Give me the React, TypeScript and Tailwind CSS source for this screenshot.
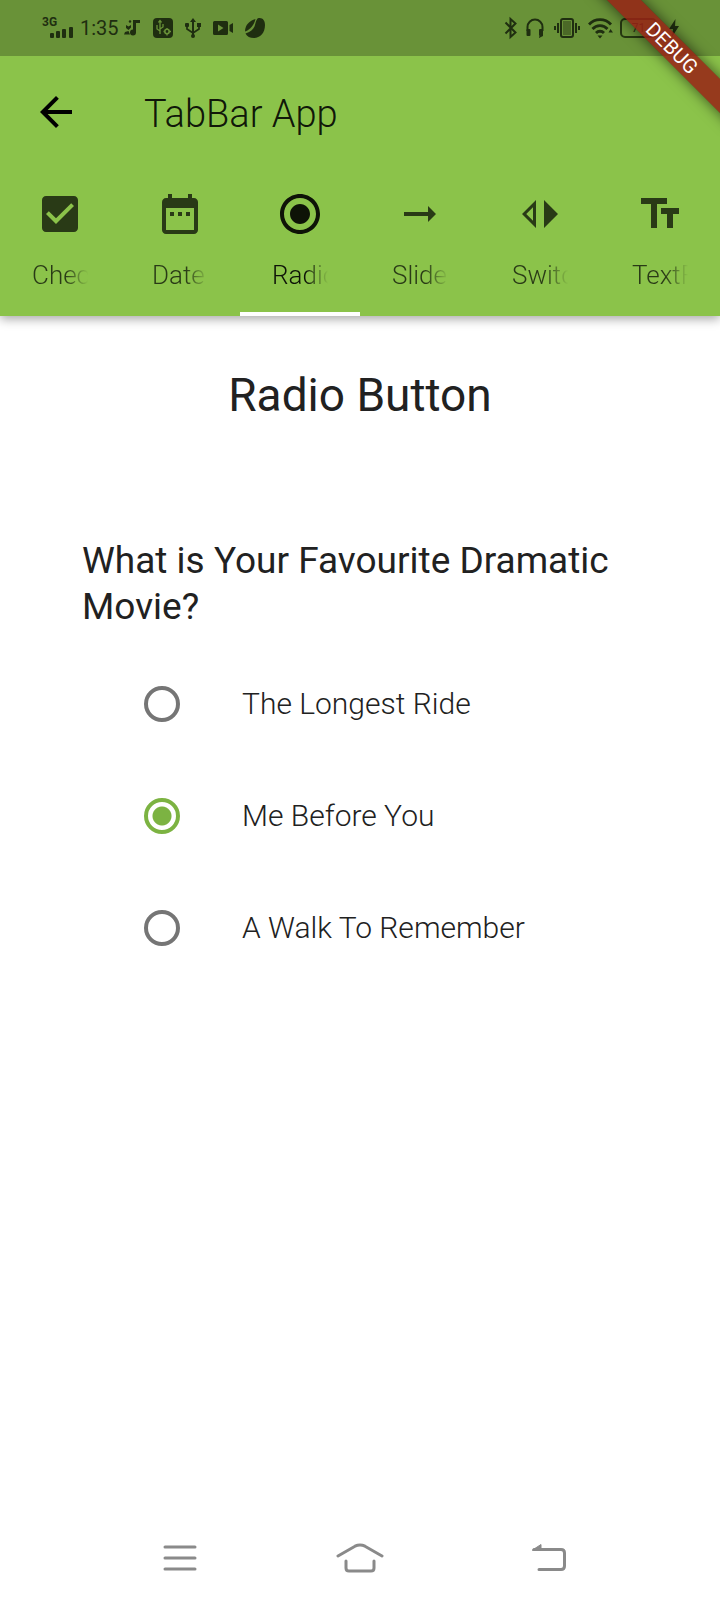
import { useState } from "react";
import type { ReactNode } from "react";

const tabs = [
  {
    label: "Checkbox",
    path: "M19 3H5c-1.11 0-2 .9-2 2v14c0 1.1.89 2 2 2h14c1.11 0 2-.9 2-2V5c0-1.1-.89-2-2-2zm-9 14l-5-5 1.41-1.41L10 14.17l7.59-7.59L19 8l-9 9z",
  },
  {
    label: "Date",
    path: "M9 11H7v2h2v-2zm4 0h-2v2h2v-2zm4 0h-2v2h2v-2zm2-7h-1V2h-2v2H8V2H6v2H5c-1.11 0-1.99.9-1.99 2L3 20c0 1.1.89 2 2 2h14c1.1 0 2-.9 2-2V6c0-1.1-.9-2-2-2zm0 16H5V9h14v11z",
  },
  {
    label: "Radio",
    path: "M12 7c-2.76 0-5 2.24-5 5s2.24 5 5 5 5-2.24 5-5-2.24-5-5-5zm0-5C6.48 2 2 6.48 2 12s4.48 10 10 10 10-4.48 10-10S17.52 2 12 2zm0 18c-4.42 0-8-3.58-8-8s3.58-8 8-8 8 3.58 8 8-3.58 8-8 8z",
  },
  { label: "Slider", path: "M16.01 11H4v2h12.01v3L20 12l-3.99-4v3z" },
  { label: "Switch", path: "M8.5 8.62v6.76L5.12 12 8.5 8.62M10 5l-7 7 7 7V5zm4 0v14l7-7-7-7z" },
  { label: "TextField", path: "M2.5 4v3h5v12h3V7h5V4h-13zm19 5h-9v3h3v7h3v-7h3V9z" },
];

const movies = ["The Longest Ride", "Me Before You", "A Walk To Remember"];

function StatusIcon({ w, children }: { w: number; children: ReactNode }) {
  return (
    <svg width={w} height="24" viewBox={`0 0 ${w} 24`} fill="currentColor" className="shrink-0" aria-hidden="true">
      {children}
    </svg>
  );
}

function StatusBar() {
  return (
    <div className="flex h-14 items-center justify-between bg-[#699238] pr-10 pl-[42px] text-[#1f2e10]">
      <div className="flex items-center">
        <div className="relative h-6 w-8">
          <span className="absolute top-0 left-0 text-xs leading-[12px] font-bold">3G</span>
          <StatusIcon w={32}>
            <rect x="8" y="17" width="4" height="5" rx="1" />
            <rect x="14" y="15" width="4" height="7" rx="1" />
            <rect x="20" y="13" width="4" height="9" rx="1" />
            <rect x="27" y="11" width="4" height="11" rx="1" />
          </StatusIcon>
        </div>
        <span className="ml-1.5 w-10 text-[20px] leading-6">1:35</span>
        <div className="ml-1 flex items-center gap-3">
          <StatusIcon w={17}>
            <path d="M9 4h7v3h-4v9.500a3 3 0 1 1-3-3zM2 9l2.500 1.500L7 9v2.500L4.500 14 2 12zM1 16l3.500-1 1.500 3.500H0z" />
            <circle cx="6" cy="5.500" r="1.200" />
          </StatusIcon>
          <StatusIcon w={20}>
            <rect x="0" y="2" width="20" height="20" rx="4" />
            <g fill="none" stroke="#699238" strokeWidth="1.300">
              <path d="M7 5v13M4 9v4l3 2M10 8v3l-3 2" />
              <path d="M5.500 6.500L7 4.500l1.500 2" />
              <circle cx="14" cy="15.500" r="2.200" strokeWidth="1.600" />
              <path d="M14 12v1M14 18v1.500M10.500 15.500h1M16.500 15.500h1.500" />
            </g>
          </StatusIcon>
          <StatusIcon w={16}>
            <path d="M8 2l3 4H5zM7 5h2v16H7z" />
            <circle cx="8" cy="20" r="2" />
            <rect x="0" y="7" width="4" height="4" rx="1" />
            <rect x="12" y="7" width="4" height="4" />
            <path d="M2 10v3l6 4 6-4v-3" fill="none" stroke="currentColor" strokeWidth="1.700" />
          </StatusIcon>
          <StatusIcon w={20}>
            <path
              fillRule="evenodd"
              d="M1.500 5h12a1.500 1.500 0 0 1 1.500 1.500v11a1.500 1.500 0 0 1-1.500 1.500h-12A1.500 1.500 0 0 1 0 17.500v-11A1.500 1.500 0 0 1 1.500 5zM5 8.500v7l5.500-3.500z"
            />
            <path d="M16.500 9L20 7v10l-3.500-2z" />
          </StatusIcon>
          <StatusIcon w={20}>
            <path d="M12.500 2.500C17 1 20 4 20 9c0 8-5 13-11 13-4 0-7-1.500-8.500-4.500C5 16 8 14 9.500 10.500c1-2.500 1-5.500 3-8z" />
            <path d="M10.500 3C4.500 4.500 0 9 0 15.500 5.500 13.500 9 9 10.500 3z" />
          </StatusIcon>
        </div>
      </div>
      <div className="flex items-center">
        <StatusIcon w={14}>
          <path d="M1.500 6.500l10 10L6.500 21V3l5 4.500-10 10" fill="none" stroke="currentColor" strokeWidth="2" />
        </StatusIcon>
        <div className="ml-2 flex">
          <StatusIcon w={18}>
            <path d="M1.500 15v-4a7.500 7.500 0 0 1 15 0v4" fill="none" stroke="currentColor" strokeWidth="2" />
            <rect x="0.500" y="13" width="4" height="7" rx="1" />
            <rect x="13" y="13" width="4" height="7" rx="1" />
            <path d="M17 17v3l-4 2v-1.500l2.500-1z" />
          </StatusIcon>
        </div>
        <div className="ml-2.5 flex">
          <StatusIcon w={26}>
            <rect x="7" y="3" width="12" height="18" rx="2" fill="none" stroke="currentColor" strokeWidth="2" />
            <rect x="9" y="5" width="8" height="14" opacity="0.4" />
            <path d="M4 7v10M1 10v4M22 7v10M25 10v4" stroke="currentColor" strokeWidth="2" />
          </StatusIcon>
        </div>
        <div className="ml-2 flex">
          <StatusIcon w={26}>
            <g fill="none" stroke="currentColor" strokeWidth="2.800">
              <path d="M1 8.500a15 15 0 0 1 22 0" />
              <path d="M4.500 13a10 10 0 0 1 15 0" />
              <path d="M8 17a5.500 5.500 0 0 1 8 0" />
            </g>
            <path d="M9.500 19.500h5L12 22.500zM20.500 16.500l2-3.500 2.500 3.500z" />
          </StatusIcon>
        </div>
        <div className="ml-1.5 flex h-5 w-[37px] items-center justify-center rounded-[5px] border-2 border-[#263811] text-xs leading-none">
          71
        </div>
        <span className="h-2 w-[3px] rounded-r-sm bg-[#263811]" />
        <div className="ml-2 flex">
          <StatusIcon w={12}>
            <path d="M7.500 3L1 13h4l-1 8 7-11H7z" />
          </StatusIcon>
        </div>
      </div>
    </div>
  );
}

function DebugBanner() {
  return (
    <div className="pointer-events-none absolute top-0 right-0 z-20 h-36 w-36 overflow-hidden">
      <div className="absolute top-[36px] right-[-52px] flex h-6 w-[200px] rotate-45 items-center justify-center bg-[#982215]/85 text-[20px] leading-6 text-white shadow-[0_0_14px_rgba(0,0,0,0.6)]">
        DEBUG
      </div>
    </div>
  );
}

export default function App() {
  const [tab, setTab] = useState(2);
  const [movie, setMovie] = useState("Me Before You");

  return (
    <div className="relative flex min-h-screen flex-col overflow-hidden bg-white font-['Roboto',sans-serif] text-[#212121]">
      <DebugBanner />
      <header className="bg-[#8bc34a] shadow-[0_3px_10px_rgba(0,0,0,0.35)]">
        <StatusBar />
        <div className="flex h-28 items-center pl-8">
          <button type="button" aria-label="Back" className="text-black">
            <svg width="48" height="48" viewBox="0 0 24 24" fill="currentColor">
              <path d="M20 11H7.830l5.590-5.590L12 4l-8 8 8 8 1.410-1.410L7.830 13H20v-2z" />
            </svg>
          </button>
          <h1 className="ml-16 pt-1 text-[38px] leading-[48px] font-light text-black/90">TabBar App</h1>
        </div>
        <div role="tablist" className="grid h-[148px] grid-cols-6">
          {tabs.map((t, i) => (
            <button
              key={t.label}
              type="button"
              role="tab"
              aria-selected={i === tab}
              onClick={() => setTab(i)}
              className={
                i === tab
                  ? "flex min-w-0 flex-col items-center border-b-4 border-white px-8 pt-[22px] text-black/90"
                  : "flex min-w-0 flex-col items-center border-b-4 border-transparent px-8 pt-[22px] text-black/70"
              }
            >
              <svg width="48" height="48" viewBox="0 0 24 24" fill="currentColor" className="shrink-0" aria-hidden="true">
                <path d={t.path} />
              </svg>
              <span className="mt-5 w-full overflow-hidden text-left text-[26px] leading-[34px] font-light whitespace-nowrap [mask-image:linear-gradient(to_right,black_60%,transparent)]">
                {t.label}
              </span>
            </button>
          ))}
        </div>
      </header>
      <main className="flex flex-1 flex-col px-20">
        <h2 className="mt-12 text-center text-[46px] leading-[62px] font-normal">Radio Button</h2>
        <fieldset className="mt-28">
          <legend className="pl-0.5 text-[37px] leading-[46px] font-normal">What is Your Favourite Dramatic Movie?</legend>
          <div className="mt-[18px] px-16">
            {movies.map((m) => (
              <label key={m} className="flex h-28 items-center gap-[62px] text-[30px] leading-10 font-light">
                <input
                  type="radio"
                  name="movie"
                  value={m}
                  checked={movie === m}
                  onChange={() => setMovie(m)}
                  className="m-0 size-9 shrink-0 appearance-none rounded-full border-4 border-[#757575] checked:border-[#7cb342] checked:bg-[radial-gradient(circle,#7cb342_9px,transparent_10px)]"
                />
                {m}
              </label>
            ))}
          </div>
        </fieldset>
      </main>
      <nav className="grid h-[84px] grid-cols-3 items-center px-[88px] text-[#8a8a8a]">
        <button type="button" aria-label="Recent apps" className="flex justify-center pl-0.5">
          <svg width="36" height="30" viewBox="0 0 36 30" fill="none" stroke="currentColor" strokeWidth="3" strokeLinecap="round">
            <path d="M3 4h30M3 15h30M3 26h30" />
          </svg>
        </button>
        <button type="button" aria-label="Home" className="flex justify-center">
          <svg width="48" height="30" viewBox="0 0 48 30" fill="none" stroke="currentColor" strokeWidth="3" strokeLinecap="round">
            <path d="M2 13L19 3.200q5-2.500 10 0L46 13M10 18v7q0 3 3 3h22q3 0 3-3v-7" />
          </svg>
        </button>
        <button type="button" aria-label="Back" className="flex justify-center pl-4">
          <svg width="36" height="30" viewBox="0 0 36 30" fill="none" stroke="currentColor" strokeWidth="3" strokeLinecap="round">
            <path d="M3 6.500h27q3.500 0 3.500 3.500v13q0 3.500-3.500 3.500H8" />
            <path d="M1.500 7L10 1.500V7z" fill="currentColor" strokeWidth="1" strokeLinejoin="round" />
          </svg>
        </button>
      </nav>
    </div>
  );
}
